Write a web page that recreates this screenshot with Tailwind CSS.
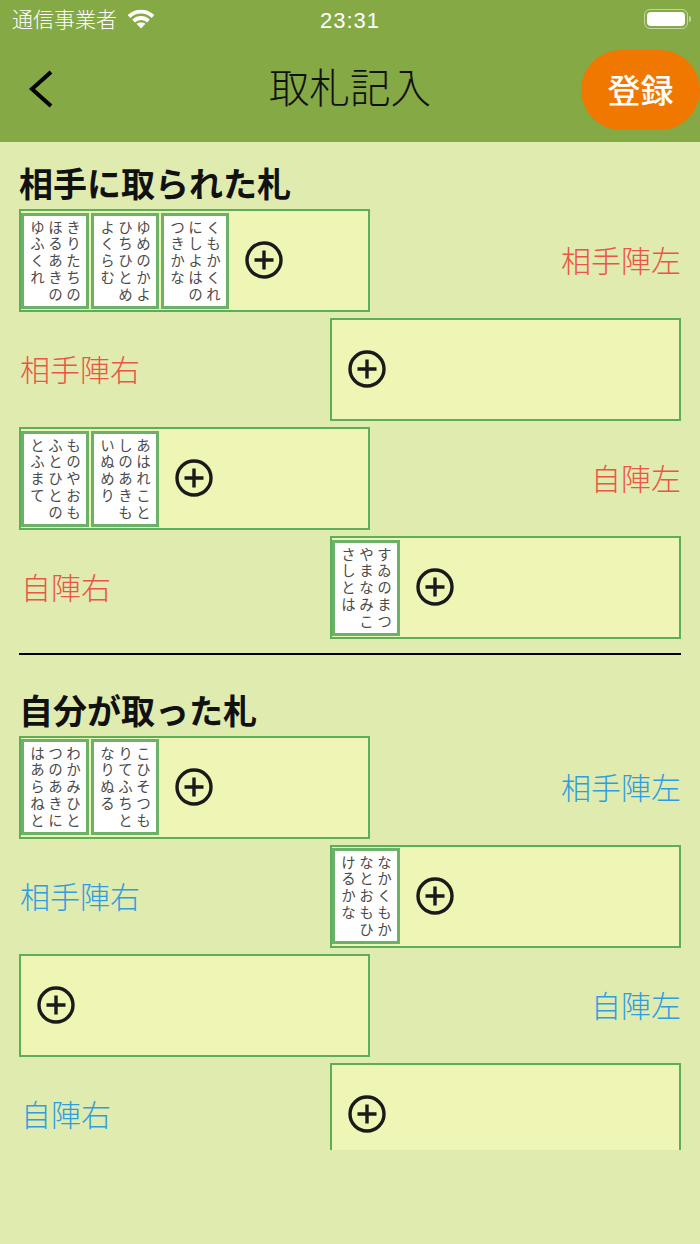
<!DOCTYPE html>
<html lang="ja">
<head>
  <meta charset="UTF-8">
  <meta name="viewport" content="width=device-width, initial-scale=1.0">
  <title>取札記入</title>
  <script src="https://cdn.jsdelivr.net/npm/@tailwindcss/browser@4"></script>
</head>
<body class="h-[1244px] w-[700px] overflow-hidden bg-[#e0ebb0] font-['Noto_Sans_CJK_JP',sans-serif]">
  <!-- header -->
  <header class="relative h-[142px] bg-[#84a945]">
    <div class="flex h-[37px] items-center justify-between pl-[12px] pr-[9px] text-white">
      <div class="flex items-center gap-[10px]">
        <span class="text-[21px] font-light">通信事業者</span>
        <svg class="h-[20px] w-[28px]" viewBox="0 0 28 20" fill="none" stroke="#fff" stroke-width="3.8">
          <path d="M2 7.5C9 1 19 1 26 7.5" />
          <path d="M6.5 12C11 8 17 8 21.5 12" />
          <path d="M14 19.5l-4.5-4.7c2.6-1.8 6.4-1.8 9 0z" fill="#fff" stroke="none" />
        </svg>
      </div>
      <span class="absolute left-[320px] top-[4px] font-['Liberation_Sans',sans-serif] text-[22px] tracking-[1px]">23:31</span>
      <div class="flex items-center">
        <div class="flex h-[20px] w-[44px] items-center rounded-[6px] border border-white/50 p-[2px]">
          <div class="h-full w-full rounded-[4px] bg-white"></div>
        </div>
        <div class="ml-[1px] h-[6px] w-[2px] rounded-r bg-white/50"></div>
      </div>
    </div>
    <div class="relative flex h-[105px] items-center justify-center">
      <svg class="absolute left-[28px] top-[33px] h-[38px] w-[26px]" viewBox="0 0 26 38" fill="none" stroke="#000" stroke-width="4">
        <path d="M23 2L4 19l19 17" />
      </svg>
      <h1 class="mb-[7px] text-[40.5px] font-light text-[#111]">取札記入</h1>
      <button class="absolute right-0 top-[13px] h-[80px] w-[119px] rounded-[40px] bg-[#f07800] text-[33px] font-medium text-white">登録</button>
    </div>
  </header>

  <main class="h-[1008px] overflow-hidden px-[19px]">
    <h2 class="flex h-[67px] items-end pb-[4px] text-[34px] leading-[44px] font-semibold text-[#111]">相手に取られた札</h2>

    <div class="flex flex-col gap-[6px]">
      <div class="flex items-center justify-between">
        <div class="flex h-[103px] w-[351px] items-center border-2 border-[#5dae58] bg-[#eef5b5]">
          <div class="flex gap-[2px]">
            <div class="h-[96px] w-[68px] border-[3px] border-[#6cb168] bg-white pt-[4px] pr-[4px] pl-[2px] text-[14.5px] leading-[18px] tracking-[2.2px] whitespace-nowrap text-[#4a4a4a] [writing-mode:vertical-rl]">きりたちの<br>ほるあきの<br>ゆふくれ</div>
            <div class="h-[96px] w-[68px] border-[3px] border-[#6cb168] bg-white pt-[4px] pr-[4px] pl-[2px] text-[14.5px] leading-[18px] tracking-[2.2px] whitespace-nowrap text-[#4a4a4a] [writing-mode:vertical-rl]">ゆめのかよ<br>ひちひとめ<br>よくらむ</div>
            <div class="h-[96px] w-[68px] border-[3px] border-[#6cb168] bg-white pt-[4px] pr-[4px] pl-[2px] text-[14.5px] leading-[18px] tracking-[2.2px] whitespace-nowrap text-[#4a4a4a] [writing-mode:vertical-rl]">くもかくれ<br>にしよはの<br>つきかな</div>
          </div>
          <svg class="mb-[1px] ml-[16px] h-[38px] w-[38px]" viewBox="0 0 38 38" fill="none" stroke="#1a1a1a"><circle cx="19" cy="19" r="17" stroke-width="3.4" /><path d="M19 9.5v19M9.5 19h19" stroke-width="3.4" /></svg>
        </div>
        <span class="mb-[2px] text-[30px] font-light text-[#ec5545]">相手陣左</span>
      </div>

      <div class="flex items-center justify-between">
        <span class="mb-[2px] pl-[1px] text-[30px] font-light text-[#ec5545]">相手陣右</span>
        <div class="flex h-[103px] w-[351px] items-center border-2 border-[#5dae58] bg-[#eef5b5] pl-[16px]">
          <svg class="mb-[1px] h-[38px] w-[38px]" viewBox="0 0 38 38" fill="none" stroke="#1a1a1a"><circle cx="19" cy="19" r="17" stroke-width="3.4" /><path d="M19 9.5v19M9.5 19h19" stroke-width="3.4" /></svg>
        </div>
      </div>

      <div class="flex items-center justify-between">
        <div class="flex h-[103px] w-[351px] items-center border-2 border-[#5dae58] bg-[#eef5b5]">
          <div class="flex gap-[2px]">
            <div class="h-[96px] w-[68px] border-[3px] border-[#6cb168] bg-white pt-[4px] pr-[4px] pl-[2px] text-[14.5px] leading-[18px] tracking-[2.2px] whitespace-nowrap text-[#4a4a4a] [writing-mode:vertical-rl]">ものやおも<br>ふとひとの<br>とふまて</div>
            <div class="h-[96px] w-[68px] border-[3px] border-[#6cb168] bg-white pt-[4px] pr-[4px] pl-[2px] text-[14.5px] leading-[18px] tracking-[2.2px] whitespace-nowrap text-[#4a4a4a] [writing-mode:vertical-rl]">あはれこと<br>しのあきも<br>いぬめり</div>
          </div>
          <svg class="mb-[1px] ml-[16px] h-[38px] w-[38px]" viewBox="0 0 38 38" fill="none" stroke="#1a1a1a"><circle cx="19" cy="19" r="17" stroke-width="3.4" /><path d="M19 9.5v19M9.5 19h19" stroke-width="3.4" /></svg>
        </div>
        <span class="mb-[2px] text-[30px] font-light text-[#ec5545]">自陣左</span>
      </div>

      <div class="flex items-center justify-between">
        <span class="mb-[2px] pl-[2px] text-[30px] font-light text-[#ec5545]">自陣右</span>
        <div class="flex h-[103px] w-[351px] items-center border-2 border-[#5dae58] bg-[#eef5b5]">
          <div class="h-[96px] w-[68px] border-[3px] border-[#6cb168] bg-white pt-[4px] pr-[4px] pl-[2px] text-[14.5px] leading-[18px] tracking-[2.2px] whitespace-nowrap text-[#4a4a4a] [writing-mode:vertical-rl]">すゐのまつ<br>やまなみこ<br>さしとは</div>
          <svg class="mb-[1px] ml-[16px] h-[38px] w-[38px]" viewBox="0 0 38 38" fill="none" stroke="#1a1a1a"><circle cx="19" cy="19" r="17" stroke-width="3.4" /><path d="M19 9.5v19M9.5 19h19" stroke-width="3.4" /></svg>
        </div>
      </div>
    </div>

    <hr class="mt-[14px] border-t-2 border-black">

    <h2 class="flex h-[80.5px] items-end pb-[4px] text-[34px] leading-[44px] font-semibold text-[#111]">自分が取った札</h2>

    <div class="flex flex-col gap-[6px]">
      <div class="flex items-center justify-between">
        <div class="flex h-[103px] w-[351px] items-center border-2 border-[#5dae58] bg-[#eef5b5]">
          <div class="flex gap-[2px]">
            <div class="h-[96px] w-[68px] border-[3px] border-[#6cb168] bg-white pt-[4px] pr-[4px] pl-[2px] text-[14.5px] leading-[18px] tracking-[2.2px] whitespace-nowrap text-[#4a4a4a] [writing-mode:vertical-rl]">わかみひと<br>つのあきに<br>はあらねと</div>
            <div class="h-[96px] w-[68px] border-[3px] border-[#6cb168] bg-white pt-[4px] pr-[4px] pl-[2px] text-[14.5px] leading-[18px] tracking-[2.2px] whitespace-nowrap text-[#4a4a4a] [writing-mode:vertical-rl]">こひそつも<br>りてふちと<br>なりぬる</div>
          </div>
          <svg class="mb-[1px] ml-[16px] h-[38px] w-[38px]" viewBox="0 0 38 38" fill="none" stroke="#1a1a1a"><circle cx="19" cy="19" r="17" stroke-width="3.4" /><path d="M19 9.5v19M9.5 19h19" stroke-width="3.4" /></svg>
        </div>
        <span class="mb-[2px] text-[30px] font-light text-[#2f9ee0]">相手陣左</span>
      </div>

      <div class="flex items-center justify-between">
        <span class="mb-[2px] pl-[1px] text-[30px] font-light text-[#2f9ee0]">相手陣右</span>
        <div class="flex h-[103px] w-[351px] items-center border-2 border-[#5dae58] bg-[#eef5b5]">
          <div class="h-[96px] w-[68px] border-[3px] border-[#6cb168] bg-white pt-[4px] pr-[4px] pl-[2px] text-[14.5px] leading-[18px] tracking-[2.2px] whitespace-nowrap text-[#4a4a4a] [writing-mode:vertical-rl]">なかくもか<br>なとおもひ<br>けるかな</div>
          <svg class="mb-[1px] ml-[16px] h-[38px] w-[38px]" viewBox="0 0 38 38" fill="none" stroke="#1a1a1a"><circle cx="19" cy="19" r="17" stroke-width="3.4" /><path d="M19 9.5v19M9.5 19h19" stroke-width="3.4" /></svg>
        </div>
      </div>

      <div class="flex items-center justify-between">
        <div class="flex h-[103px] w-[351px] items-center border-2 border-[#5dae58] bg-[#eef5b5] pl-[16px]">
          <svg class="mb-[1px] h-[38px] w-[38px]" viewBox="0 0 38 38" fill="none" stroke="#1a1a1a"><circle cx="19" cy="19" r="17" stroke-width="3.4" /><path d="M19 9.5v19M9.5 19h19" stroke-width="3.4" /></svg>
        </div>
        <span class="mb-[2px] text-[30px] font-light text-[#2f9ee0]">自陣左</span>
      </div>

      <div class="flex items-center justify-between">
        <span class="mb-[2px] pl-[2px] text-[30px] font-light text-[#2f9ee0]">自陣右</span>
        <div class="flex h-[103px] w-[351px] items-center border-2 border-[#5dae58] bg-[#eef5b5] pl-[16px]">
          <svg class="mb-[1px] h-[38px] w-[38px]" viewBox="0 0 38 38" fill="none" stroke="#1a1a1a"><circle cx="19" cy="19" r="17" stroke-width="3.4" /><path d="M19 9.5v19M9.5 19h19" stroke-width="3.4" /></svg>
        </div>
      </div>
    </div>
  </main>
</body>
</html>
